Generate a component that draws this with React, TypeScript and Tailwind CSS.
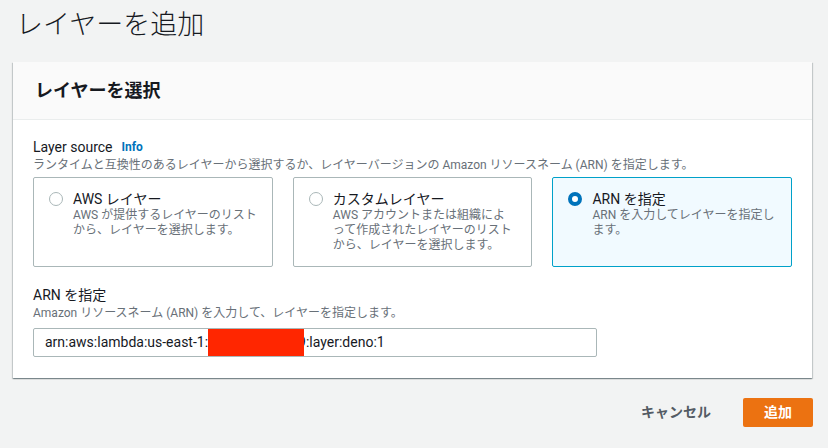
import React from "react";

interface SourceOption {
  title: string;
  lines: string[];
  selected?: boolean;
}

const options: SourceOption[] = [
  { title: "AWS レイヤー", lines: ["AWS が提供するレイヤーのリスト", "から、レイヤーを選択します。"] },
  {
    title: "カスタムレイヤー",
    lines: ["AWS アカウントまたは組織によ", "って作成されたレイヤーのリスト", "から、レイヤーを選択します。"],
  },
  { title: "ARN を指定", lines: ["ARN を入力してレイヤーを指定し", "ます。"], selected: true },
];

const font = "font-['Roboto','Noto_Sans_CJK_JP',sans-serif]";

function Radio({ checked }: { checked?: boolean }) {
  return checked ? (
    <span className="mt-[1px] h-[14px] w-[14px] shrink-0 rounded-full border-[4px] border-[#0073bb] bg-white" />
  ) : (
    <span className="mt-[1px] h-[14px] w-[14px] shrink-0 rounded-full border border-[#aab7b8] bg-white" />
  );
}

export default function App() {
  return (
    <div className={`${font} h-[448px] w-full overflow-hidden bg-[#f2f3f3] text-[#16191f]`}>
      <h1 className="h-[62px] pl-[16px] pt-[6px] text-[27px] font-light leading-[38px]">レイヤーを追加</h1>

      <div className="ml-[13px] mr-[16px] bg-white shadow-[0_1px_1px_0_rgba(0,28,36,0.3),1px_1px_1px_0_rgba(0,28,36,0.15),-1px_1px_1px_0_rgba(0,28,36,0.15)]">
        <div className="flex h-[58px] items-center border-b border-[#eaeded] bg-[#fafafa] pl-[22px]">
          <h2 className="text-[18px] font-bold">レイヤーを選択</h2>
        </div>

        <div className="px-[20px] pb-[21px] pt-[17px]">
          <div className="flex items-center gap-[9px] text-[14px] leading-[20px]">
            <span>Layer source</span>
            <span className="text-[12px] font-bold text-[#0073bb]">Info</span>
          </div>
          <p className="text-[12px] leading-[16px] text-[#687078]">
            ランタイムと互換性のあるレイヤーから選択するか、レイヤーバージョンの Amazon リソースネーム (ARN) を指定します。
          </p>

          <div className="mt-[4px] flex gap-[20px]">
            {options.map((o) => (
              <div
                key={o.title}
                className={`flex h-[90px] w-[240px] gap-[10px] rounded-[2px] border px-[15px] pt-[13px] ${
                  o.selected ? "border-[#00a1c9] bg-[#f1faff]" : "border-[#aab7b8] bg-white"
                }`}
              >
                <Radio checked={o.selected} />
                <div>
                  <div className="text-[14px] leading-[16px]">{o.title}</div>
                  <div className="mt-[1px] whitespace-nowrap text-[12px] leading-[15px] text-[#687078]">
                    {o.lines.map((l) => (
                      <div key={l}>{l}</div>
                    ))}
                  </div>
                </div>
              </div>
            ))}
          </div>

          <div className="mt-[18px] text-[14px] leading-[20px]">ARN を指定</div>
          <p className="text-[12px] leading-[16px] text-[#687078]">
            Amazon リソースネーム (ARN) を入力して、レイヤーを指定します。
          </p>
          <div className="mt-[7px] flex h-[29px] w-[564px] items-center overflow-hidden rounded-[2px] border border-[#aab7b8] bg-white pl-[11px] text-[14px]">
            <span>arn:aws:lambda:us-east-1:</span>
            <span className="relative z-10 -mr-[6px] inline-block h-[27px] w-[96px] shrink-0 bg-[#ff2600]" />
            <span>9:layer:deno:1</span>
          </div>
        </div>
      </div>

      <div className="mr-[15px] mt-[20px] flex items-center justify-end gap-[12px]">
        <button className="px-[20px] text-[14px] font-bold text-[#545b64]">キャンセル</button>
        <button className="h-[29px] w-[70px] rounded-[2px] bg-[#ec7211] text-[14px] font-bold text-white">追加</button>
      </div>
    </div>
  );
}
